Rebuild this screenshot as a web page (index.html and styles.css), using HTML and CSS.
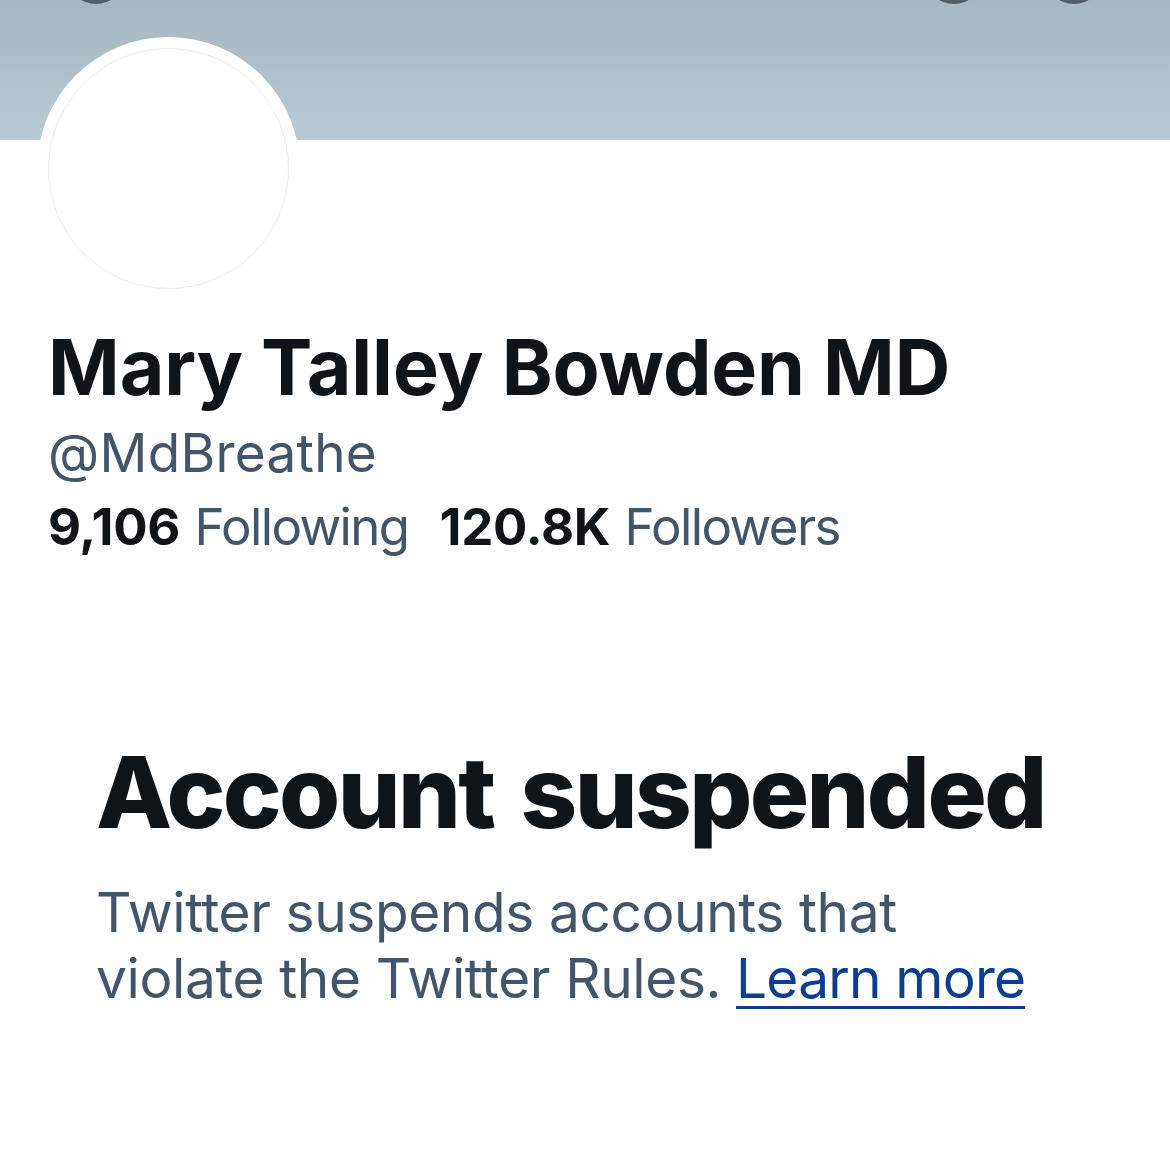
FILE: index.html
```html
<!DOCTYPE HTML>
<html>

<head>
  <meta charset="utf-8">
  <title>Mary Talley Bowden MD (@MdBreathe)</title>
  <link rel="stylesheet" href="styles.css">
</head>

<body>
  <div class="banner">
    <a href="javascript:;" class="nav-btn btn-back"></a>
    <a href="javascript:;" class="nav-btn btn-search"></a>
    <a href="javascript:;" class="nav-btn btn-more"></a>
  </div>

  <div class="profile">
    <div class="avatar">
      <div class="avatar-inner"></div>
    </div>
    <h1 class="name">Mary Talley Bowden MD</h1>
    <div class="handle">@MdBreathe</div>
    <div class="stats">
      <a href="javascript:;"><b>9,106</b> <span>Following</span></a>
      <a href="javascript:;"><b>120.8K</b> <span>Followers</span></a>
    </div>
  </div>

  <div class="suspended">
    <h2>Account suspended</h2>
    <p>Twitter suspends accounts that violate the Twitter Rules. <a href="javascript:;">Learn more</a></p>
  </div>
</body>

</html>
```

FILE: styles.css
```css
* {
  margin: 0;
  padding: 0;
}

body {
  background: #fff;
  font-family: Inter, "Noto Sans", "Liberation Sans", sans-serif;
  color: #0f1419;
}

a {
  text-decoration: none;
  color: inherit;
}

/* 顶部背景 */
.banner {
  height: 140px;
  background: linear-gradient(#a7b7c1, #b8cad3);
  position: relative;
}

.nav-btn {
  position: absolute;
  top: -54px;
  width: 58px;
  height: 58px;
  border-radius: 50%;
  background: rgba(15, 20, 25, 0.55);
}

.btn-back {
  left: 67px;
}

.btn-search {
  left: 925px;
}

.btn-more {
  left: 1045px;
}

/* 头像和名字 */
.profile {
  padding: 0 48px;
}

.avatar {
  width: 241px;
  height: 241px;
  padding: 11px;
  margin: -103px 0 0 -11px;
  border-radius: 50%;
  background: #fff;
  position: relative;
}

.avatar-inner {
  width: 239px;
  height: 239px;
  border: 1px solid #ebebeb;
  border-radius: 50%;
}

.name {
  margin-top: 21px;
  font-size: 77px;
  line-height: 92px;
  font-weight: 700;
  letter-spacing: -0.1px;
}

.handle {
  margin-top: 10px;
  font-size: 53px;
  line-height: 60px;
  letter-spacing: 0.3px;
  color: #435569;
}

.stats {
  margin-top: 14px;
  display: flex;
  gap: 31px;
  font-size: 51px;
  line-height: 60px;
  color: #435569;
}

.stats b {
  color: #0f1419;
  font-weight: 700;
  letter-spacing: -0.3px;
}

.stats span {
  letter-spacing: -1.6px;
}

/* 封号提示 */
.suspended {
  padding: 176px 96px 0;
}

.suspended h2 {
  font-size: 99px;
  line-height: 119px;
  font-weight: 800;
  letter-spacing: -2.6px;
  word-spacing: 8px;
}

.suspended p {
  margin-top: 27px;
  font-size: 55px;
  line-height: 66px;
  letter-spacing: -0.4px;
  color: #435569;
}

.suspended p a {
  color: #0b3d91;
  letter-spacing: -0.8px;
  text-decoration: underline;
  text-decoration-thickness: 3px;
  text-underline-offset: 8px;
}
```
